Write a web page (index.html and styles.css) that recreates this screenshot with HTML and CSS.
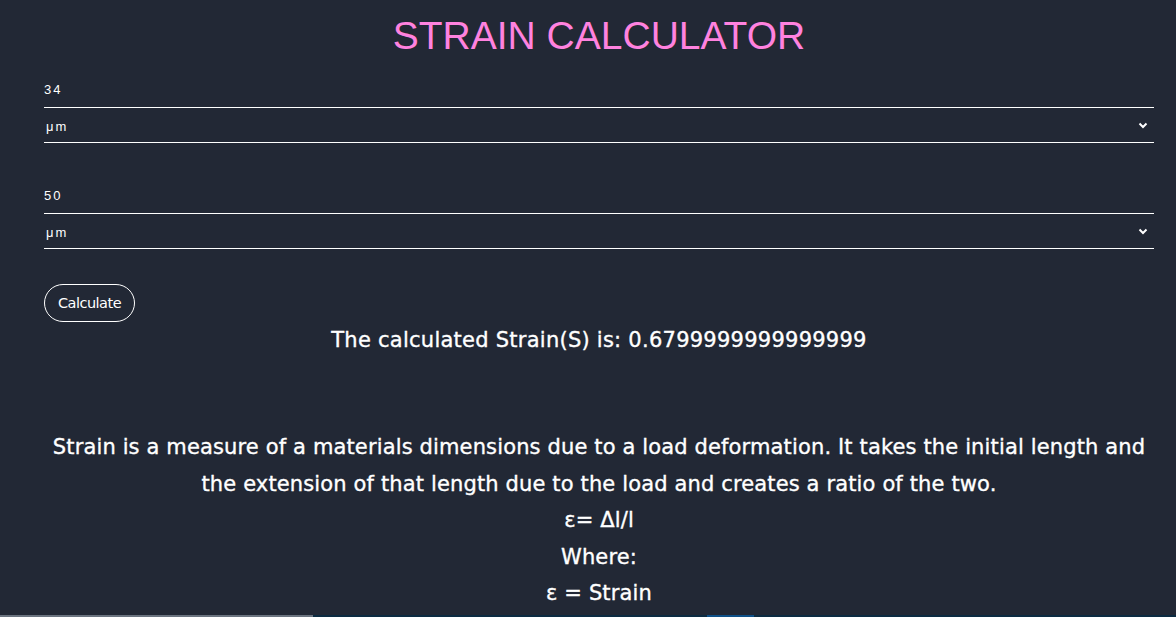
FILE: index.html
```html
<!DOCTYPE html>
<html lang="en">
<head>
<meta charset="utf-8">
<title>Strain Calculator</title>
<link rel="stylesheet" href="styles.css">
</head>
<body>
<div class="page">
<h1 class="title">STRAIN CALCULATOR</h1>
<form class="form">
  <div class="group">
    <input class="field" type="text" value="34">
    <div class="select-wrap">
      <select class="unit"><option>μm</option></select>
      <svg class="chev" width="10" height="7" viewBox="0 0 10 7"><path d="M1.5 1.5 L5 5 L8.5 1.5" fill="none" stroke="#fff" stroke-width="2"/></svg>
    </div>
  </div>
  <div class="group">
    <input class="field" type="text" value="50">
    <div class="select-wrap">
      <select class="unit"><option>μm</option></select>
      <svg class="chev" width="10" height="7" viewBox="0 0 10 7"><path d="M1.5 1.5 L5 5 L8.5 1.5" fill="none" stroke="#fff" stroke-width="2"/></svg>
    </div>
  </div>
  <button class="calc" type="button">Calculate</button>
</form>
<div class="result">The calculated Strain(S) is: 0.6799999999999999</div>
<p class="info">Strain is a measure of a materials dimensions due to a load deformation. It takes the initial length and the extension of that length due to the load and creates a ratio of the two.<br>ε= Δl/l<br>Where:<br>ε = Strain</p>
</div>
<div class="bottom-bar"><span class="seg-grey"></span><span class="seg-dark"></span><span class="seg-blue"></span><span class="seg-rest"></span></div>
</body>
</html>
```
FILE: styles.css
```css
html, body {
  margin: 0;
  background: #222835;
  color: #fff;
  font-family: "DejaVu Sans", sans-serif;
}
.page {
  padding-left: 22px;
}
.title {
  margin: 14px 0 0;
  text-align: center;
  font-family: "Liberation Sans", Arial, sans-serif;
  font-weight: 400;
  font-size: 39px;
  line-height: 44px;
  color: #ff82df;
}
.form {
  margin-top: 18px;
  padding: 0 22px;
  display: flex;
  flex-direction: column;
}
.group {
  display: flex;
  flex-direction: column;
  margin-bottom: 39px;
}
.group + .group {
  margin-bottom: 35px;
}
.field {
  display: block;
  height: 32px;
  padding: 0 0 4px;
  box-sizing: border-box;
  background: transparent;
  border: none;
  border-bottom: 1px solid #fff;
  color: #fff;
  font-family: "Liberation Sans", Arial, sans-serif;
  font-size: 13px;
  letter-spacing: 2px;
  outline: none;
}
.select-wrap {
  position: relative;
}
.unit {
  display: block;
  width: 100%;
  height: 35px;
  padding: 2px 0 0 2px;
  appearance: none;
  -webkit-appearance: none;
  background: transparent;
  border: none;
  border-bottom: 1px solid #fff;
  border-radius: 0;
  color: #fff;
  font-family: "Liberation Sans", Arial, sans-serif;
  font-size: 13px;
  letter-spacing: 2px;
  outline: none;
}
.chev {
  position: absolute;
  right: 6px;
  top: 14px;
}
.calc {
  align-self: flex-start;
  height: 38px;
  width: 91px;
  padding: 0;
  background: transparent;
  border: 1px solid #fff;
  border-radius: 19px;
  color: #fff;
  font-family: "DejaVu Sans", sans-serif;
  font-size: 14.5px;
  letter-spacing: -0.5px;
}
.result {
  margin-top: 3px;
  text-align: center;
  font-size: 21px;
  line-height: 30px;
  letter-spacing: 0.25px;
  -webkit-text-stroke: 0.35px #fff;
}
.info {
  margin: 74px 20px 0;
  text-align: center;
  font-size: 21px;
  line-height: 36.5px;
  letter-spacing: 0.14px;
  -webkit-text-stroke: 0.35px #fff;
}
.bottom-bar {
  position: fixed;
  left: 0;
  right: 0;
  bottom: 0;
  height: 2px;
  display: flex;
}
.seg-grey { width: 313px; background: #6b7480; }
.seg-dark { width: 394px; background: #0c2b42; }
.seg-blue { width: 47px; background: #0e5088; }
.seg-rest { flex: 1; background: #0c2b42; }
```
